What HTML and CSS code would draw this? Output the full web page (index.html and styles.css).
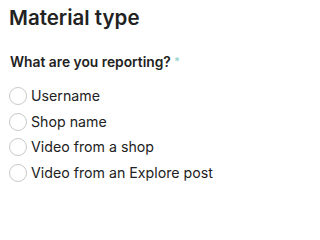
FILE: index.html
```html
<!DOCTYPE html>
<html>
<head>
<meta charset="utf-8">
<link rel="stylesheet" href="styles.css">
</head>
<body>
<div class="panel">
  <h1 class="title">Material type</h1>
  <fieldset class="group">
    <legend class="label">What are you reporting? <span class="req">*</span></legend>
    <label class="option"><span class="radio"></span><span class="text">Username</span></label>
    <label class="option"><span class="radio"></span><span class="text">Shop name</span></label>
    <label class="option"><span class="radio"></span><span class="text">Video from a shop</span></label>
    <label class="option"><span class="radio"></span><span class="text">Video from an Explore post</span></label>
  </fieldset>
</div>
</body>
</html>
```
FILE: styles.css
```css
html, body {
  margin: 0;
  padding: 0;
  background: #fff;
}
body {
  font-family: "Inter", "Noto Sans", sans-serif;
  color: #222;
}
.panel {
  padding: 4px 9px 0 9px;
}
.title {
  margin: 0;
  font-size: 20.5px;
  font-weight: 600;
  line-height: 28px;
  letter-spacing: 0;
}
.group {
  border: 0;
  margin: 19px 0 0 0;
  padding: 0;
}
.label {
  padding: 0 0 0 1px;
  font-size: 13.8px;
  font-weight: 600;
  line-height: 20px;
  margin-bottom: 11px;
}
.req {
  color: #8ccfca;
  font-weight: 400;
  font-size: 11px;
  vertical-align: 2px;
}
.option {
  display: flex;
  align-items: center;
  gap: 4px;
  height: 25.7px;
}
.radio {
  width: 16px;
  height: 16px;
  border: 1px solid #c9c9c9;
  border-radius: 50%;
  flex: none;
}
.text {
  font-size: 14.2px;
  line-height: 18px;
}
```
